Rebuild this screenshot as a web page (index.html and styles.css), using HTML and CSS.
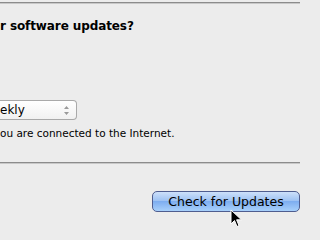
FILE: index.html
```html
<!DOCTYPE html>
<html>
<head>
<meta charset="utf-8">
<link rel="stylesheet" href="styles.css">
</head>
<body>
<div class="pane">
  <div class="rule top"></div>
  <h1 class="title">r software updates?</h1>
  <div class="popup">
    <span class="value">ekly</span>
    <svg class="arrows" width="7" height="11" viewBox="0 0 7 11"><path d="M3.5 1 L6 4 L1 4 Z M1 7 L6 7 L3.5 10 Z" fill="#9a9a9a"/></svg>
  </div>
  <p class="note">ou are connected to the Internet.</p>
  <div class="rule bottom"></div>
  <div class="actions">
    <button class="btn">Check for Updates</button>
  </div>
</div>
<svg class="cursor" width="14" height="20" viewBox="0 0 14 20"><path d="M1 1 L1 15 L4.5 11.5 L7 17.5 L9 16.6 L6.6 10.8 L11.5 10.8 Z" fill="#000" stroke="#fff" stroke-width="1"/></svg>
</body>
</html>
```
FILE: styles.css
```css
html, body {
  margin: 0;
  padding: 0;
  background: #ececec;
  width: 320px;
  height: 240px;
  overflow: hidden;
  font-family: "DejaVu Sans", "Liberation Sans", sans-serif;
  color: #000;
}
.pane {
  width: 300px;
  display: flex;
  flex-direction: column;
}
.rule {
  height: 1px;
  background: #8c8c8c;
  border-bottom: 1px solid #c8c8c8;
}
.top { margin-top: 2px; }
.title {
  margin: 14px 0 0 0;
  font-size: 12px;
  font-weight: bold;
  line-height: 16px;
  letter-spacing: -0.1px;
}
.popup {
  margin-top: 66px;
  width: 77px;
  height: 20px;
  box-sizing: border-box;
  border: 1px solid #a9a9a9;
  border-left: none;
  border-radius: 0 4px 4px 0;
  background: linear-gradient(#ffffff, #f1f1f1);
  display: flex;
  align-items: center;
  justify-content: space-between;
  padding-right: 6px;
  font-size: 12px;
}
.value { line-height: 18px; }
.note {
  margin: 7px 0 0 0;
  font-size: 10.5px;
  line-height: 13px;
}
.bottom { margin-top: 22px; }
.actions {
  display: flex;
  justify-content: flex-end;
  margin-top: 27px;
}
.btn {
  width: 148px;
  height: 21px;
  padding: 0;
  border: 1px solid #4f5d8f;
  border-radius: 5px;
  background: linear-gradient(#cde0fa 0%, #9fc3f3 45%, #7eaef0 50%, #a8d0fb 100%);
  font-family: "DejaVu Sans", "Liberation Sans", sans-serif;
  font-size: 12.5px;
  color: #000;
  line-height: 19px;
}
.cursor {
  position: absolute;
  left: 230px;
  top: 209px;
}
```
